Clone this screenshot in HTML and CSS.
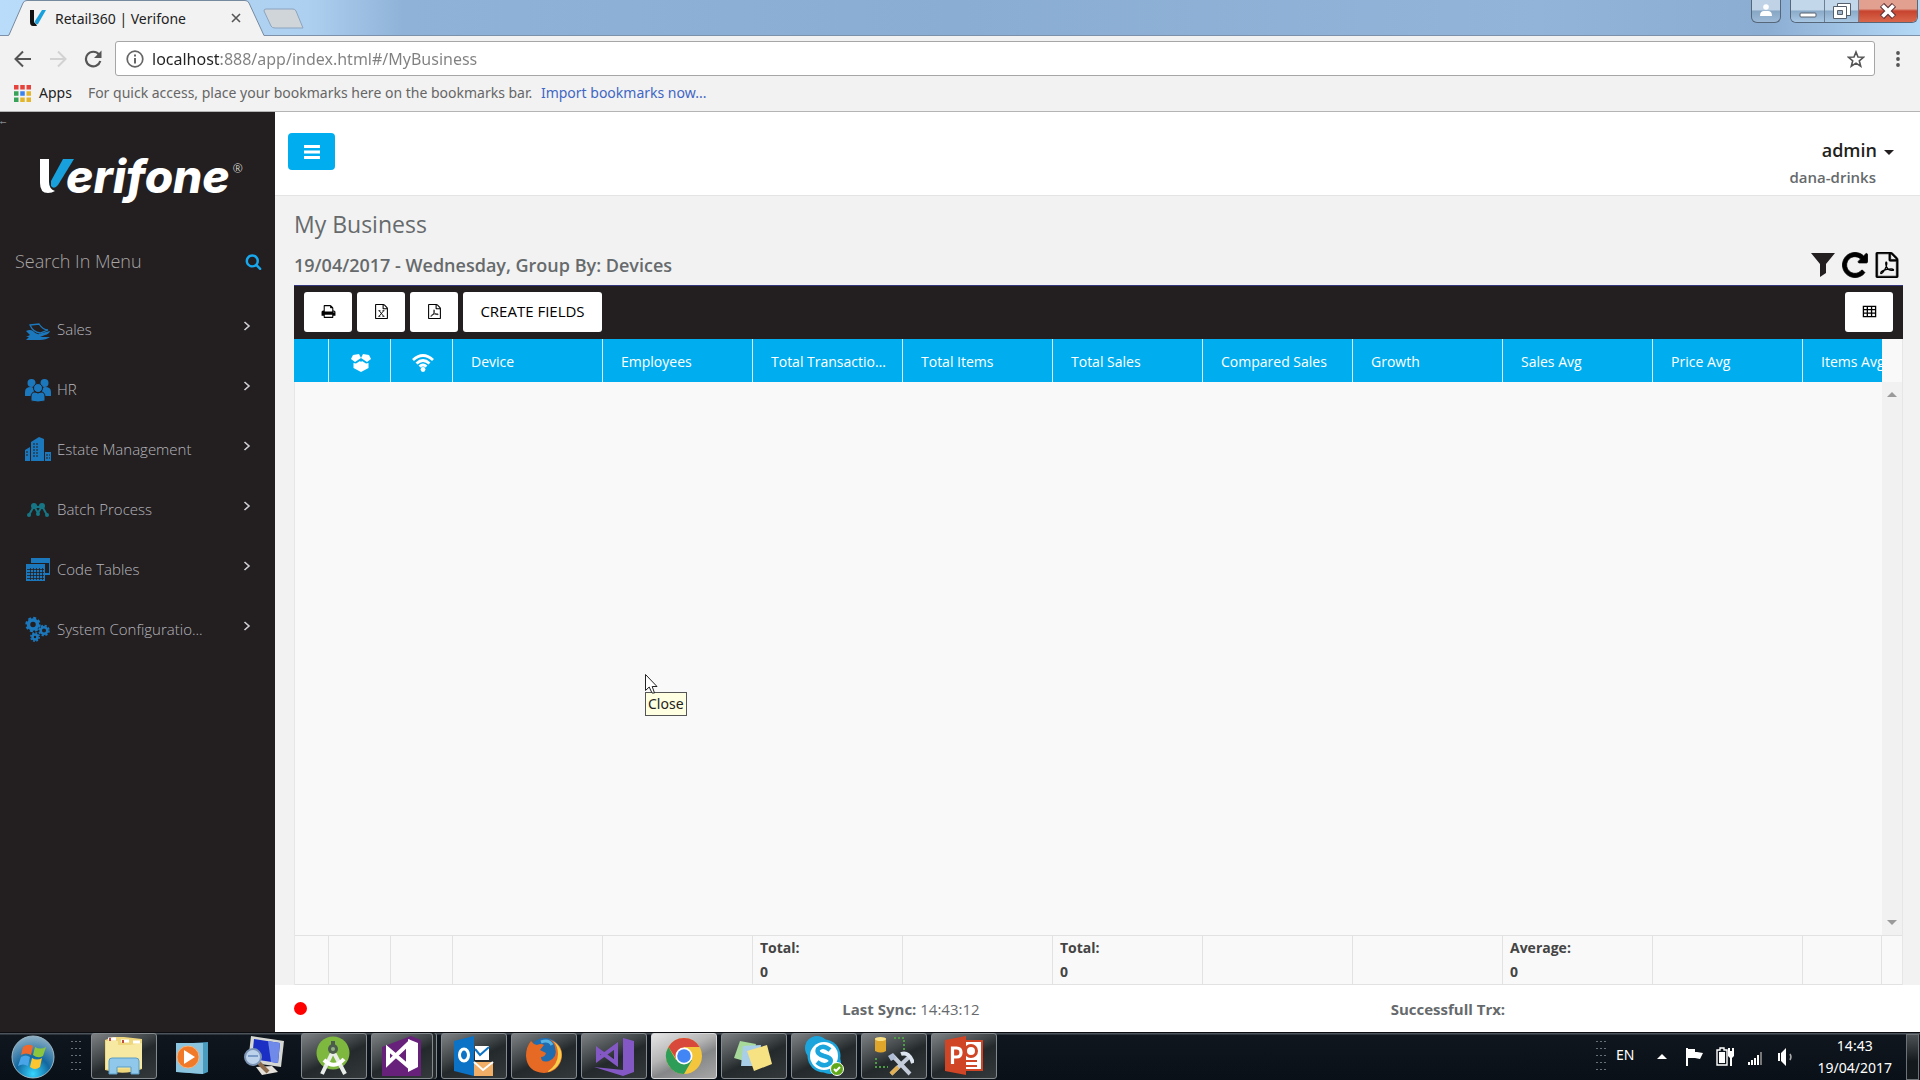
FILE: index.html
```html
<!DOCTYPE html>
<html lang="en">
<head>
    <meta charset="UTF-8" />
    <meta name="viewport" content="width=device-width, initial-scale=1" />
    <title>Retail360 | Verifone</title>
    <link rel="stylesheet" href="styles.css">
</head>
<body>
    <!-- shared icon shapes -->
    <svg class="sprite" aria-hidden="true">
        <symbol id="i-file" viewBox="0 0 1792 1792">
            <path d="M1596 380q28 28 48 76t20 88v1152q0 40-28 68t-68 28h-1344q-40 0-68-28t-28-68v-1600q0-40 28-68t68-28h896q40 0 88 20t76 48zm-444-244v376h376q-10-29-22-41l-313-313q-12-12-41-22zm384 1528v-1024h-416q-40 0-68-28t-28-68v-416h-768v1536h1280z" />
        </symbol>
        <symbol id="i-pdf" viewBox="0 0 1792 1792">
            <use href="#i-file" />
            <path d="M840 690q-70 60 10 310q70 230 330 270q200 20 160-60q-50-80-450-10q-310 50-410 190q-60 120 40 90q170-100 320-480q90-290 0-310z" fill="none" stroke="currentColor" stroke-width="85" />
        </symbol>
        <symbol id="i-excel" viewBox="0 0 1792 1792">
            <use href="#i-file" />
            <path d="M620 800L1150 1470M1160 800L600 1470M540 800h230M1010 800h230M520 1470h230M1010 1470h230" fill="none" stroke="currentColor" stroke-width="105" />
        </symbol>
        <symbol id="i-chevron" viewBox="0 0 8 10">
            <path d="M1.500 1L6 5L1.500 9" fill="none" stroke="currentColor" stroke-width="1.600" />
        </symbol>
    </svg>

    <header class="browser">
        <div class="titlebar">
            <div class="tab">
                <svg class="tab-shape" viewBox="0 0 260 36" aria-hidden="true">
                    <path d="M0 36L2 35L16 3Q17 .5 20 .5H238Q241 .5 242 3L257 35.500L260 36" fill="#f2f2f2" stroke="#75899f" />
                </svg>
                <svg class="tab-icon" viewBox="0 0 18 18" aria-hidden="true">
                    <path d="M1 1H5V12Q5 14 7 15L8 17H4Q1 17 1 13Z" fill="#111" />
                    <path d="M13 1H17L9 15Q6 16 6 12Z" fill="#18a0dc" />
                </svg>
                <span class="tab-title">Retail360 | Verifone</span>
                <button class="tab-close" aria-label="Close tab">
                    <svg viewBox="0 0 10 10"><path d="M1 1L9 9M9 1L1 9" stroke="#555" stroke-width="1.600" /></svg>
                </button>
            </div>
            <button class="new-tab" aria-label="New tab">
                <svg viewBox="0 0 42 22"><path d="M3 1H30Q32 1 33 3L40 20H12Q9 20 8 18L1 3Q1 1 3 1Z" fill="#d0d5da" stroke="#8ba4bf" /></svg>
            </button>
            <button class="profile" aria-label="Profile">
                <svg viewBox="0 0 12 12"><circle cx="6" cy="3" r="2.800" /><path d="M0 12Q0 7 4 7H8Q12 7 12 12Z" /></svg>
            </button>
            <div class="window-controls">
                <button class="win-btn" aria-label="Minimize">
                    <svg viewBox="0 0 18 16"><rect x="1" y="10" width="16" height="4" rx="1" fill="#fff" stroke="#56606c" /></svg>
                </button>
                <button class="win-btn" aria-label="Restore">
                    <svg viewBox="0 0 18 16"><path d="M4.500 .5H17.500V12.500H4.500Z" fill="#fff" stroke="#56606c" /><path d="M.5 3.500H13.500V15.500H.5Z" fill="#fff" stroke="#56606c" /><path d="M4.500 7.500H9.500V11.500H4.500Z" fill="#a0b4cc" stroke="#56606c" /></svg>
                </button>
                <button class="win-btn win-close" aria-label="Close window">
                    <svg viewBox="0 0 18 16"><path d="M3 2L15 14M15 2L3 14" stroke="#60353a" stroke-width="6" /><path d="M3.500 2.500L14.500 13.500M14.500 2.500L3.500 13.500" stroke="#fff" stroke-width="3.800" /></svg>
                </button>
            </div>
        </div>

        <div class="navbar">
            <button class="nav-btn" aria-label="Back">
                <svg viewBox="0 0 18 18"><path d="M17 9H2M9 1.500L1.500 9L9 16.500" fill="none" stroke="#555" stroke-width="2" /></svg>
            </button>
            <button class="nav-btn" aria-label="Forward">
                <svg viewBox="0 0 18 18"><path d="M1 9H16M9 1.500L16.500 9L9 16.500" fill="none" stroke="#d2d2d2" stroke-width="2" /></svg>
            </button>
            <button class="nav-btn" aria-label="Reload">
                <svg viewBox="0 0 18 18"><path d="M15 4.500A7.300 7.300 0 1 0 16.300 11" fill="none" stroke="#555" stroke-width="2.200" /><path d="M17.500 .5V8H10Z" fill="#555" /></svg>
            </button>
            <div class="omnibox">
                <svg class="info" viewBox="0 0 18 18" aria-hidden="true"><circle cx="9" cy="9" r="7.800" fill="none" stroke="#666" stroke-width="1.700" /><path d="M9 8V13.500M9 4.500V6.500" stroke="#666" stroke-width="2" /></svg>
                <input class="url" type="text" aria-label="Address" value="localhost:888/app/index.html#/MyBusiness" />
                <button class="star" aria-label="Bookmark this page">
                    <svg viewBox="0 0 18 18"><path d="M9 2L11 7L16.500 7.300L12.300 10.800L13.700 16.200L9 13.200L4.300 16.200L5.700 10.800L1.500 7.300L7 7Z" fill="none" stroke="#555" stroke-width="1.600" /></svg>
                </button>
            </div>
            <button class="more" aria-label="Menu">
                <svg viewBox="0 0 4 18"><circle cx="2" cy="3" r="1.900" /><circle cx="2" cy="9" r="1.900" /><circle cx="2" cy="15" r="1.900" /></svg>
            </button>
        </div>

        <div class="bookmarks">
            <a class="apps" href="#apps">
                <svg viewBox="0 0 17 17" aria-hidden="true">
                    <path d="M0 0h4.500v4.500H0zM6.250 0h4.500v4.500h-4.500zM12.500 0h4.500v4.500h-4.500z" fill="#e5433c" />
                    <path d="M0 6.250h4.500v4.500H0zM0 12.500h4.500v4.500H0z" fill="#38a358" />
                    <path d="M6.250 6.250h4.500v4.500h-4.500z" fill="#3b82ee" />
                    <path d="M12.500 6.250h4.500v4.500h-4.500zM6.250 12.500h4.500v4.500h-4.500zM12.500 12.500h4.500v4.500h-4.500z" fill="#e3b52b" />
                </svg>
                Apps
            </a>
            <span class="hint">For quick access, place your bookmarks here on the bookmarks bar. <a href="#import">Import bookmarks now...</a></span>
        </div>
    </header>

    <div class="app">
        <aside class="sidebar">
            <span class="back-arrow" aria-hidden="true">←</span>
            <div class="logo" role="img" aria-label="Verifone">
                <svg viewBox="0 0 36 36" aria-hidden="true">
                    <path d="M0 2H9V25Q9 32 15 34Q12 36 8 36Q0 36 0 26Z" fill="#fff" />
                    <path d="M23 2H34L18 28Q14 33 11 29V24Z" fill="#18a0dc" />
                </svg>
                <span class="logo-text">erifone</span><sup>®</sup>
            </div>

            <form class="menu-search">
                <input type="text" aria-label="Search in menu" placeholder="Search In Menu" />
                <button type="button" aria-label="Search">
                    <svg viewBox="0 0 1792 1792"><path d="M1216 832q0-185-131.500-316.500t-316.500-131.500-316.500 131.500-131.500 316.500 131.500 316.500 316.500 131.500 316.500-131.500 131.500-316.500zm512 832q0 52-38 90t-90 38q-54 0-90-38l-343-342q-179 124-399 124-143 0-273.500-55.500t-225-150-150-225-55.500-273.500 55.500-273.500 150-225 225-150 273.500-55.500 273.500 55.500 225 150 150 225 55.500 273.500q0 220-124 399l343 343q37 37 37 90z" /></svg>
                </button>
            </form>

            <nav class="menu" aria-label="Main">
                <a href="#sales">
                    <svg class="menu-icon" viewBox="0 0 26 26" aria-hidden="true">
                        <path d="M1 15Q5 13 8 15Q12 20 17 17L25 15Q24 18 20 19L15 21H25Q21 24 15 24H1L4 21H1L5 19Z" />
                        <path d="M5 9L14 8Q18 14 23 14L15 17Q8 16 5 9Z" fill="none" stroke="currentColor" stroke-width="1.300" />
                    </svg>
                    <span>Sales</span>
                    <svg class="chevron" aria-hidden="true"><use href="#i-chevron" /></svg>
                </a>
                <a href="#hr">
                    <svg class="menu-icon" viewBox="0 0 26 26" aria-hidden="true">
                        <circle cx="6.500" cy="7" r="4" /><circle cx="19.500" cy="7" r="4" />
                        <path d="M0 20V16Q0 11 6 11Q9 11 9 16L7 20ZM26 20V16Q26 11 20 11Q17 11 17 16L19 20Z" />
                        <g stroke="#231f20"><circle cx="13" cy="12" r="4.500" /><path d="M6 25V21Q6 16 10 16Q13 18 16 16Q20 16 20 21V25Q13 27 6 25Z" /></g>
                    </svg>
                    <span>HR</span>
                    <svg class="chevron" aria-hidden="true"><use href="#i-chevron" /></svg>
                </a>
                <a href="#estate">
                    <svg class="menu-icon" viewBox="0 0 26 26" aria-hidden="true">
                        <path d="M0 25V14L5 11V25ZM6 25V6L14 1L19 3V25ZM20 25V16H26V25Z" />
                        <path d="M8 8H13M8 11H13M8 14H13M8 17H13M8 20H13M1 16H4M1 19H4M21 19H25M21 22H25" stroke="#231f20" stroke-width="1" stroke-dasharray="2 1" />
                    </svg>
                    <span>Estate Management</span>
                    <svg class="chevron" aria-hidden="true"><use href="#i-chevron" /></svg>
                </a>
                <a href="#batch">
                    <svg class="menu-icon teal" viewBox="0 0 26 26" aria-hidden="true">
                        <path d="M4 19L9 10L13 17L17 10L22 19M9 10L13 11L17 10" fill="none" stroke="currentColor" stroke-width="2" />
                        <circle cx="9" cy="10" r="3" /><circle cx="17" cy="10" r="3" /><circle cx="4" cy="19" r="2" /><circle cx="22" cy="19" r="2" /><circle cx="13" cy="18" r="2" />
                    </svg>
                    <span>Batch Process</span>
                    <svg class="chevron" aria-hidden="true"><use href="#i-chevron" /></svg>
                </a>
                <a href="#codes">
                    <svg class="menu-icon" viewBox="0 0 26 26" aria-hidden="true">
                        <path d="M6 2H25V19H20V17H24V7H6Z" />
                        <path d="M1 8H20V25H1Z" />
                        <path d="M2 13.500H19M2 16.500H19M2 19.500H19M2 22.500H19M5.500 12V24M8.500 12V24M11.500 12V24M14.500 12V24M17.500 12V24" stroke="#231f20" stroke-width=".8" />
                    </svg>
                    <span>Code Tables</span>
                    <svg class="chevron" aria-hidden="true"><use href="#i-chevron" /></svg>
                </a>
                <a href="#config">
                    <svg class="menu-icon" viewBox="0 0 26 26" aria-hidden="true">
                        <g fill="none" stroke="currentColor">
                            <circle cx="8" cy="8.500" r="4.500" stroke-width="3.500" /><circle cx="8" cy="8.500" r="6.700" stroke-width="2" stroke-dasharray="3 2.260" />
                            <circle cx="19" cy="14.500" r="3.300" stroke-width="2.500" /><circle cx="19" cy="14.500" r="5" stroke-width="1.600" stroke-dasharray="2.200 1.730" />
                            <circle cx="10" cy="21" r="2.500" stroke-width="2.500" /><circle cx="10" cy="21" r="4.200" stroke-width="1.500" stroke-dasharray="1.800 1.500" />
                        </g>
                    </svg>
                    <span>System Configuratio...</span>
                    <svg class="chevron" aria-hidden="true"><use href="#i-chevron" /></svg>
                </a>
            </nav>
        </aside>

        <div class="content">
            <header class="topbar">
                <button class="menu-toggle" aria-label="Toggle menu">
                    <svg viewBox="0 0 16 14"><path d="M0 1.500H16M0 7H16M0 12.500H16" stroke="#fff" stroke-width="2.800" /></svg>
                </button>
                <div class="user">
                    <button class="user-name">admin <svg viewBox="0 0 10 5" aria-hidden="true"><path d="M0 0H10L5 5Z" /></svg></button>
                    <span class="user-org">dana-drinks</span>
                </div>
            </header>

            <main class="page">
                <h1>My Business</h1>
                <div class="subhead">
                    <h2>19/04/2017 - Wednesday, Group By: Devices</h2>
                    <div class="actions">
                        <button aria-label="Filter"><svg viewBox="0 0 26 26"><path d="M1 1H25L16 12V21L10 25V12Z" fill="#231f20" /></svg></button>
                        <button aria-label="Refresh"><svg viewBox="100 100 1592 1592"><path d="M1664 256v448q0 26-19 45t-45 19h-448q-42 0-59-40-17-39 14-69l138-138q-148-137-349-137-104 0-198.500 40.500t-163.500 109.500-109.500 163.500-40.500 198.500 40.500 198.500 109.500 163.500 163.500 109.500 198.500 40.500q119 0 225-52t179-147q7-10 23-12 15 0 25 9l137 138q9 8 9.500 20.500t-7.500 22.500q-109 132-264 204.500t-327 72.500q-156 0-298-61t-245-164-164-245-61-298 61-298 164-245 245-164 298-61q147 0 284.500 55.500t244.500 156.500l130-129q29-31 70-14 39 17 39 59z" stroke="#000" stroke-width="50" /></svg></button>
                        <button aria-label="Export page to PDF"><svg stroke="#000" stroke-width="40"><use href="#i-pdf" /></svg></button>
                    </div>
                </div>

                <section class="grid" aria-label="Devices">
                    <div class="grid-toolbar">
                        <button aria-label="Print"><svg viewBox="0 0 1792 1792"><path d="M448 1536h896v-256h-896v256zm0-640h896v-384h-160q-40 0-68-28t-28-68v-160h-640v640zm1152 64q0-26-19-45t-45-19-45 19-19 45 19 45 45 19 45-19 19-45zm128 0v416q0 13-9.500 22.500t-22.500 9.500h-224v160q0 40-28 68t-68 28h-960q-40 0-68-28t-28-68v-160h-224q-13 0-22.500-9.500t-9.500-22.500v-416q0-79 56.500-135.500t135.500-56.500h64v-544q0-40 28-68t68-28h672q40 0 88 20t76 48l152 152q28 28 48 76t20 88v256h64q79 0 135.500 56.500t56.500 135.500z" /></svg></button>
                        <button aria-label="Export to Excel"><svg><use href="#i-excel" /></svg></button>
                        <button aria-label="Export to PDF"><svg><use href="#i-pdf" /></svg></button>
                        <button class="create">CREATE FIELDS</button>
                        <button class="columns" aria-label="Columns"><svg viewBox="0 0 16 16"><path d="M1.500 2.500H14.500V13.500H1.500ZM1.500 6H14.500M1.500 9.700H14.500M5.700 3V13.500M10.200 3V13.500" fill="none" stroke="#000" stroke-width="1.400" /></svg></button>
                    </div>

                    <div class="grid-head">
                        <table>
                            <colgroup><col class="c-mark"><col class="c-icon"><col class="c-icon"><col span="10" class="c-data"></colgroup>
                            <thead>
                                <tr>
                                    <th></th>
                                    <th aria-label="Package"><svg viewBox="0 0 20 18"><path d="M2 1L8 0L10 4L4 8L0 5ZM18 1L12 0L10 4L16 8L20 5ZM2.500 9L5 9.500L9 7L10 8L11 7L15 9.500L17.500 9V14L10 18L2.500 14Z" fill="#fff" /></svg></th>
                                    <th aria-label="Connection"><svg viewBox="0 0 22 18"><path d="M1 6Q11 -3 21 6M4.500 9.500Q11 3.500 17.500 9.500M7.500 12.500Q11 9.500 14.500 12.500" fill="none" stroke="#fff" stroke-width="2.800" /><circle cx="11" cy="15.500" r="2.400" fill="#fff" /></svg></th>
                                    <th>Device</th>
                                    <th>Employees</th>
                                    <th>Total Transactions</th>
                                    <th>Total Items</th>
                                    <th>Total Sales</th>
                                    <th>Compared Sales</th>
                                    <th>Growth</th>
                                    <th>Sales Avg</th>
                                    <th>Price Avg</th>
                                    <th>Items Avg</th>
                                </tr>
                            </thead>
                        </table>
                    </div>

                    <div class="grid-body">
                        <div class="scroll" aria-hidden="true">
                            <svg viewBox="0 0 10 5"><path d="M0 5H10L5 0Z" /></svg>
                            <svg viewBox="0 0 10 5"><path d="M0 0H10L5 5Z" /></svg>
                        </div>
                    </div>

                    <div class="grid-foot">
                        <div class="foot-wrap">
                            <table>
                                <colgroup><col class="c-mark"><col class="c-icon"><col class="c-icon"><col span="10" class="c-data"></colgroup>
                                <tbody>
                                    <tr>
                                        <td></td><td></td><td></td><td></td><td></td>
                                        <td>Total:<br>0</td>
                                        <td></td>
                                        <td>Total:<br>0</td>
                                        <td></td><td></td>
                                        <td>Average:<br>0</td>
                                        <td></td><td></td>
                                    </tr>
                                </tbody>
                            </table>
                        </div>
                    </div>
                </section>
            </main>

            <footer class="status">
                <div><span class="dot"></span></div>
                <div><b>Last Sync:</b> 14:43:12</div>
                <div><b>Successfull Trx:</b></div>
            </footer>
        </div>
    </div>

    <footer class="taskbar">
        <button class="start" aria-label="Start">
            <svg viewBox="0 0 44 44">
                <defs><radialGradient id="orb" cx=".5" cy=".9" r=".9"><stop offset="0" stop-color="#35d6ff" /><stop offset=".45" stop-color="#12679f" /><stop offset="1" stop-color="#8fb0c4" /></radialGradient></defs>
                <circle cx="22" cy="22" r="21" fill="url(#orb)" stroke="#9db9c8" />
                <path d="M12 12Q17 8 22 11L20 20Q15 17 10 20Z" fill="#f0682b" />
                <path d="M24 12Q29 15 35 12L32 21Q27 24 22 20Z" fill="#8cc63e" />
                <path d="M10 22Q15 19 19 22L17 31Q12 28 7 31Z" fill="#4aa5e8" />
                <path d="M21 23Q26 26 31 23L29 32Q24 36 19 32Z" fill="#fbc62f" />
            </svg>
        </button>
        <span class="grip"></span>

        <nav class="tasks" aria-label="Running programs">
            <button class="task open" aria-label="Explorer">
                <svg viewBox="0 0 40 40"><path d="M1 4L9 1H20L38 3V33Q20 40 1 34Z" fill="#efd77e" /><path d="M2 5H14V9H26L38 7V32L2 33Z" fill="#f7e9a2" /><path d="M4 3H12M17 5H25M29 6H36" stroke="#fff" stroke-width="3" /><path d="M6 2V5M19 4V7" stroke="#c64b3b" stroke-width="2" /><path d="M5 38V25Q5 22 8 22H32Q35 22 35 25V38H27V31H13V38Z" fill="#8fc8ea" stroke="#5b9cc6" /></svg>
            </button>
            <button class="task" aria-label="Media player">
                <svg viewBox="0 0 40 40"><path d="M4 8L34 6V36L29 38L4 36Z" fill="#4a9cbf" /><path d="M2 7H29V38L2 36Z" fill="#8cc5df" /><circle cx="14" cy="21" r="11" fill="#f0792a" stroke="#f7b27e" /><path d="M10 14L21 21L10 28Z" fill="#fff" /></svg>
            </button>
            <button class="task" aria-label="Remote viewer">
                <svg viewBox="0 0 40 40"><path d="M7 0L40 5L37 31L4 26Z" fill="#d5d7d2" /><path d="M10 3L36 7L34 27L8 23Z" fill="#1b2fc4" /><path d="M24 5L36 7L34 27L27 26Z" fill="#6f8ae8" /><path d="M12 31L28 30L34 36L18 39Z" fill="#e3e1da" /><path d="M15 27L24 36" stroke="#8c6c4d" stroke-width="4" /><circle cx="9" cy="21" r="8" fill="#bdd3ec" stroke="#7d95b5" stroke-width="2" /><path d="M4 20H14" stroke="#7b9cc7" stroke-width="2" /></svg>
            </button>
            <button class="task open" aria-label="Android Studio">
                <svg viewBox="0 0 40 40"><circle cx="19" cy="17" r="16.500" fill="#7fb83f" /><path d="M19 15L8 38M19 15L31 38" stroke="#e9eeea" stroke-width="4" /><path d="M10 24Q20 34 30 23" fill="none" stroke="#fff" stroke-width="4" /><circle cx="19" cy="13" r="5" fill="#4b5b4e" /><path d="M19 5V13" stroke="#4b5b4e" stroke-width="4" /><circle cx="19" cy="13" r="2" fill="#93ae80" /></svg>
            </button>
            <button class="task open stacked" aria-label="Visual Studio 2013">
                <svg viewBox="0 0 40 40"><path d="M0 11L29 0L39 4V40H0Z" fill="#68217a" /><path d="M6 13L26 30V8L6 27Z" fill="none" stroke="#fff" stroke-width="4" /><path d="M26 3L36 7V31L26 36Z" fill="#fff" /></svg>
            </button>
            <button class="task open" aria-label="Outlook">
                <svg viewBox="0 0 40 40"><path d="M0 5L20 0V40L0 35Z" fill="#0b72c6" /><ellipse cx="10" cy="19" rx="4.500" ry="6" fill="none" stroke="#fff" stroke-width="3" /><path d="M21 10H35V24H21Z" fill="#fff" /><path d="M21 13L26 19L35 11" fill="none" stroke="#0b72c6" stroke-width="2" /><path d="M20 26H39V40H20Z" fill="#f0ae67" /><path d="M20 26L29 34L39 26" fill="none" stroke="#fff" stroke-width="2" /></svg>
            </button>
            <button class="task open" aria-label="Firefox">
                <svg viewBox="0 0 40 40"><circle cx="21" cy="19" r="17" fill="#1f6cb0" /><path d="M25 3Q39 8 38 21Q35 36 20 37Q3 36 2 20Q2 11 7 5Q9 8 13 9Q17 7 20 9L16 14L22 17Q21 21 17 21Q17 27 25 25Q34 21 31 11Q30 6 25 3Z" fill="#e66a24" /><path d="M29 5Q41 13 36 26Q32 34 23 36Q34 29 34 18Q34 10 29 5Z" fill="#f7cf4a" /><path d="M17 6Q25 3 28 9" fill="none" stroke="#58b3e2" stroke-width="3" /></svg>
            </button>
            <button class="task open" aria-label="Visual Studio 2015">
                <svg viewBox="0 0 40 40"><path d="M29 2L40 5V36L29 40L0 31L29 34Z" fill="#8358c5" /><path d="M4 14L22 27V10L4 23Z" fill="none" stroke="#8358c5" stroke-width="4" /></svg>
            </button>
            <button class="task open active" aria-label="Chrome">
                <svg viewBox="0 0 40 40"><circle cx="20" cy="20" r="18" fill="#f4c63d" /><path d="M4.400 11A18 18 0 0 1 35.600 11H20L13 24Z" fill="#d8483b" /><path d="M4.400 11A18 18 0 0 0 20 38L28 24L12 24Z" fill="#2e9d58" /><circle cx="20" cy="20" r="8.500" fill="#fff" /><circle cx="20" cy="20" r="6.800" fill="#4285f4" /></svg>
            </button>
            <button class="task open" aria-label="Sticky notes">
                <svg viewBox="0 0 40 40"><path d="M6 5L22 8L17 27L0 22Z" fill="#a7d99b" /><path d="M9 10L27 9L25 30L7 30Z" fill="#a9cee8" /><path d="M13 15L33 9L38 28L20 35Z" fill="#f7e283" /></svg>
            </button>
            <button class="task open" aria-label="Skype">
                <svg viewBox="0 0 40 40"><circle cx="13" cy="12" r="12" fill="#1ca5dc" /><circle cx="20" cy="20" r="16.500" fill="#1ca5dc" /><circle cx="26" cy="27" r="11" fill="#1ca5dc" /><circle cx="20" cy="20" r="14" fill="#fff" /><path d="M26 14Q19 8 14 13Q12 18 20 20Q29 22 26 27Q20 32 13 26" fill="none" stroke="#1ca5dc" stroke-width="4.500" /><circle cx="33" cy="33" r="6.500" fill="#61a91b" stroke="#fff" /><path d="M30 33L32 35L36 31" fill="none" stroke="#fff" stroke-width="2" /></svg>
            </button>
            <button class="task open" aria-label="Database tools">
                <svg viewBox="0 0 40 40"><path d="M1 2H12V15Q7 18 1 15Z" fill="#e0a62b" /><ellipse cx="6.500" cy="3" rx="5.500" ry="2" fill="#f8df83" /><path d="M20 2H30V14M2 22V31H14" fill="none" stroke="#4e9b46" stroke-width="2" stroke-dasharray="2 2" /><path d="M18 19L36 38M35 21L17 38" stroke="#c4ccda" stroke-width="4" /><path d="M24 31L17 38" stroke="#e2b054" stroke-width="4" /><path d="M27 18Q35 15 39 27" fill="none" stroke="#dce5ef" stroke-width="4" /><path d="M14 20L19 17L22 22L17 25Z" fill="#aebcd6" /></svg>
            </button>
            <button class="task open" aria-label="PowerPoint">
                <svg viewBox="0 0 40 40"><path d="M20 5H38V34H20Z" fill="#fff" stroke="#d04525" stroke-width="2" /><circle cx="27" cy="15" r="5.500" fill="none" stroke="#d04525" stroke-width="3" /><path d="M22 25H33M22 30H33" stroke="#d04525" stroke-width="2" /><path d="M1 4L22 0V39L1 35Z" fill="#d04525" /><path d="M8.500 28V12H12.500Q17 12 17 16.500T12.500 21H8.500" fill="none" stroke="#fff" stroke-width="3.200" /></svg>
            </button>
        </nav>

        <div class="tray">
            <span class="grip"></span>
            <span class="lang">EN</span>
            <svg class="tray-up" viewBox="0 0 10 5" aria-hidden="true"><path d="M0 5L5 0L10 5Z" /></svg>
            <svg viewBox="0 0 20 20" aria-hidden="true"><path d="M1 1H3V19H1ZM3 2H10V5H12L18 6L15 12L10 11H3Z" /></svg>
            <svg viewBox="0 0 20 20" aria-hidden="true"><path d="M1 3H4V1H8V3H11V18H1Z" fill="none" stroke="#fff" stroke-width="1.400" /><path d="M3 5H9V16H3ZM12 4H18V9L16 11V19H14V11L12 9ZM12 1H14V4H12ZM16 1H18V4H16Z" /></svg>
            <svg viewBox="0 0 20 20" aria-hidden="true"><path d="M1 15H3V18H1ZM4 13H6V18H4ZM7 11H9V18H7ZM10 8H12V18H10Z" /><path d="M13 5H15V18H13Z" fill="#777" /></svg>
            <svg viewBox="0 0 20 20" aria-hidden="true"><path d="M0 6H2V14H0ZM3 6L8 1V19L3 14Z" /><path d="M12 7Q14 10 12 13" fill="none" stroke="#aaa" stroke-width="1.500" /></svg>
            <time class="clock">14:43<br>19/04/2017</time>
            <button class="show-desktop" aria-label="Show desktop"></button>
        </div>
    </footer>

    <div class="pointer">
        <svg viewBox="0 0 13 20" aria-hidden="true"><path d="M.5 .5V16.500L4.200 13L7 19H9.500L7.200 12.500H12Z" fill="#fff" stroke="#222" /></svg>
        <span class="tooltip" role="tooltip">Close</span>
    </div>
</body>
</html>
```

FILE: styles.css
```css
*, *::before, *::after {
    box-sizing: border-box;
}

body {
    margin: 0;
    min-height: 100vh;
    display: flex;
    flex-direction: column;
    font-family: "Open Sans", "Noto Sans", sans-serif;
    font-size: 14px;
    color: #666a6c;
    background: #f2f2f2;
    overflow: hidden;
}

button {
    border: none;
    background: none;
    padding: 0;
    font: inherit;
    color: inherit;
    cursor: pointer;
}

svg {
    display: block;
    fill: currentColor;
}

h1, h2 {
    margin: 0;
}

a {
    color: inherit;
    text-decoration: none;
}

.sprite {
    position: absolute;
    width: 0;
    height: 0;
}

/* Browser chrome */
.browser {
    background: #f2f2f2;
    border-bottom: 1px solid #b4b4b4;
    font-family: "Noto Sans", sans-serif;
}

.titlebar {
    display: flex;
    align-items: flex-start;
    height: 36px;
    padding: 0 2px 0 7px;
    border-bottom: 1px solid #7d92aa;
    background: linear-gradient(90deg, #b9dcfa 0, #aed0f0 16%, #8fb2d8 21%, #8aadd3 50%, #93b4d9 80%, #8badd2 92%, #b4d9f6 100%);
}

.tab {
    position: relative;
    display: flex;
    align-items: center;
    width: 256px;
    height: 36px;
    padding: 0 22px;
    color: #222;
}

.tab-shape {
    position: absolute;
    left: 0;
    top: 0;
    width: 260px;
    height: 36px;
}

.tab-icon {
    position: relative;
    width: 18px;
    height: 18px;
    margin-right: 8px;
}

.tab-title {
    position: relative;
    flex: 1;
}

.tab-close {
    position: relative;
    width: 10px;
}

.new-tab {
    width: 42px;
    margin-top: 8px;
}

.profile {
    display: flex;
    justify-content: center;
    width: 30px;
    height: 23px;
    margin: 0 9px 0 auto;
    padding-top: 4px;
    color: #fff;
    background: linear-gradient(#bfd2e6 45%, #87a6c4 50%, #9dbbd8);
    border: 1px solid #56677a;
    border-top: none;
    border-radius: 0 0 6px 6px;
}

.profile svg {
    width: 12px;
    height: 12px;
}

.window-controls {
    display: flex;
    height: 23px;
    border: 1px solid #56677a;
    border-top: none;
    border-radius: 0 0 6px 6px;
    overflow: hidden;
}

.win-btn {
    display: flex;
    justify-content: center;
    width: 34px;
    padding-top: 3px;
    border-right: 1px solid #6b7f95;
    background: linear-gradient(#c3d7ea 45%, #8aaac9 50%, #a8c8e4);
}

.win-btn svg {
    width: 18px;
    height: 16px;
}

.win-close {
    width: 58px;
    border-right: none;
    background: linear-gradient(#e2a090 40%, #c7432f 50%, #d9674a);
}

.navbar {
    display: flex;
    align-items: center;
    height: 45px;
    padding: 0 20px 0 14px;
}

.nav-btn {
    width: 18px;
    margin-right: 17px;
}

.nav-btn svg {
    width: 18px;
    height: 18px;
}

.omnibox {
    flex: 1;
    display: flex;
    align-items: center;
    height: 35px;
    margin-left: -4px;
    padding: 0 9px 0 10px;
    background: #fff;
    border: 1px solid #a6a6a6;
    border-radius: 3px;
}

.info {
    width: 18px;
    height: 18px;
}

.url {
    flex: 1;
    border: none;
    outline: none;
    padding: 0 0 0 8px;
    font-family: inherit;
    font-size: 16px;
    background: linear-gradient(90deg, #222 76px, #808080 76px);
    background-clip: text;
    color: transparent;
}

.star svg {
    width: 18px;
    height: 18px;
}

.more {
    margin-left: 21px;
    color: #555;
}

.more svg {
    width: 4px;
    height: 18px;
}

.bookmarks {
    display: flex;
    align-items: center;
    height: 30px;
    padding: 0 14px 6px;
    gap: 16px;
    font-size: 14px;
    line-height: 24px;
    color: #666;
}

.apps {
    display: flex;
    align-items: center;
    gap: 8px;
    color: #222;
}

.apps svg {
    width: 17px;
    height: 17px;
}

.hint a {
    margin-left: 5px;
    color: #3f66c4;
}

/* App */
.app {
    flex: 1;
    display: flex;
}

.sidebar {
    width: 275px;
    background: #231f20;
    color: #b6b6bd;
    font-weight: 300;
}

.back-arrow {
    display: block;
    height: 45px;
    font-family: "DejaVu Sans", sans-serif;
    font-size: 8px;
    line-height: 22px;
}

.logo {
    display: flex;
    align-items: flex-start;
    height: 36px;
    margin-left: 40px;
    color: #fff;
}

.logo svg {
    width: 36px;
    height: 36px;
    margin-right: -10px;
}

.logo-text {
    font-family: Inter, sans-serif;
    font-size: 46px;
    font-weight: 800;
    font-style: italic;
    line-height: 39px;
}

.logo sup {
    margin-left: 3px;
    font-size: 12px;
    line-height: 24px;
}

.menu-search {
    display: flex;
    align-items: center;
    height: 40px;
    margin: 48px 0 18px;
    padding: 0 13px 0 15px;
}

.menu-search input {
    flex: 1;
    min-width: 0;
    border: none;
    outline: none;
    padding: 0;
    background: none;
    font-family: inherit;
    font-size: 18px;
    font-weight: 300;
    color: #fff;
}

.menu-search input::placeholder {
    color: #a9a6a6;
}

.menu-search button {
    color: #18a8ee;
}

.menu-search svg {
    width: 17px;
    height: 17px;
}

.menu a {
    display: flex;
    align-items: center;
    height: 60px;
    padding: 0 24px 0 25px;
    font-size: 15px;
}

.menu-icon {
    width: 26px;
    height: 26px;
    margin-right: 6px;
    color: #1c78bd;
}

.menu-icon.teal {
    color: #167685;
}

.chevron {
    width: 8px;
    height: 10px;
    margin: 0 0 7px auto;
    color: #cfcfd6;
}

.content {
    flex: 1;
    min-width: 0;
    display: flex;
    flex-direction: column;
}

.topbar {
    display: flex;
    justify-content: space-between;
    align-items: flex-start;
    height: 84px;
    padding: 21px 26px 0 13px;
    background: #fff;
    border-bottom: 1px solid #e4e4e4;
}

.menu-toggle {
    display: flex;
    align-items: center;
    justify-content: center;
    width: 47px;
    height: 37px;
    background: #00aeef;
    border-radius: 4px;
}

.menu-toggle svg {
    width: 16px;
    height: 14px;
}

.user {
    display: flex;
    flex-direction: column;
    align-items: flex-end;
    padding-top: 4px;
}

.user-name {
    display: flex;
    align-items: center;
    gap: 7px;
    font-size: 18px;
    font-weight: 600;
    line-height: 26px;
    color: #231f20;
}

.user-name svg {
    width: 10px;
    height: 5px;
    margin-top: 4px;
}

.user-org {
    margin-right: 18px;
    font-size: 15px;
    font-weight: 600;
    line-height: 28px;
}

.page {
    flex: 1;
    display: flex;
    flex-direction: column;
    padding: 11px 17px 0 19px;
}

h1 {
    font-size: 23px;
    font-weight: 500;
    line-height: 34px;
}

.subhead {
    display: flex;
    justify-content: space-between;
    align-items: center;
    height: 44px;
    padding-top: 4px;
}

h2 {
    font-size: 18px;
    font-weight: 600;
}

.actions {
    display: flex;
    gap: 6px;
    padding-right: 3px;
    color: #000;
}

.actions svg {
    width: 26px;
    height: 26px;
}

.grid {
    flex: 1;
    display: flex;
    flex-direction: column;
    background: #f9f9f9;
    border-right: 1px solid #e6e6e6;
    border-left: 1px solid #e6e6e6;
}

.grid-toolbar {
    display: flex;
    gap: 5px;
    height: 54px;
    margin: 0 -1px;
    padding: 6px 10px 7px;
    background: #231f20;
    border-top: 1px solid #34367c;
    color: #000;
}

.grid-toolbar button {
    display: flex;
    align-items: center;
    justify-content: center;
    width: 48px;
    padding-bottom: 2px;
    background: #fff;
    border-radius: 3px;
}

.grid-toolbar svg {
    width: 15px;
    height: 15px;
}

.grid-toolbar .create {
    width: 139px;
    font-size: 15px;
}

.grid-toolbar .columns {
    margin-left: auto;
}

.grid table {
    width: 1658px;
    table-layout: fixed;
    border-collapse: separate;
    border-spacing: 0;
}

.c-mark {
    width: 34px;
}

.c-icon {
    width: 62px;
}

.c-data {
    width: 150px;
}

.grid-head {
    margin: 0 20px 0 -1px;
    overflow: hidden;
    background: #00aeef;
}

.grid th {
    height: 43px;
    padding: 2px 15px 0 18px;
    border-left: 1px solid #d9f1fb;
    color: #fff;
    font-size: 14px;
    font-weight: 400;
    text-align: left;
    white-space: nowrap;
    overflow: hidden;
    text-overflow: ellipsis;
}

.grid th:first-child, .grid td:first-child {
    border-left: none;
}

.grid th svg {
    width: 22px;
    height: 18px;
    margin: 3px 0 0 3px;
}

.grid-body {
    flex: 1;
    display: flex;
    justify-content: flex-end;
}

.scroll {
    display: flex;
    flex-direction: column;
    justify-content: space-between;
    width: 20px;
    padding: 10px 5px;
    background: #f1f1f1;
    color: #9a9a9a;
}

.scroll svg {
    width: 10px;
    height: 5px;
}

.grid-foot {
    border-top: 1px solid #e2e2e2;
    border-bottom: 1px solid #e2e2e2;
    padding-right: 20px;
}

.foot-wrap {
    margin-left: -1px;
    overflow: hidden;
    border-right: 1px solid #e2e2e2;
}

.grid td {
    height: 48px;
    padding: 0 7px;
    border-left: 1px solid #e2e2e2;
    color: #444;
    font-weight: 700;
    line-height: 24px;
    vertical-align: top;
}

.status {
    display: grid;
    grid-template-columns: repeat(3, 1fr);
    align-items: center;
    height: 47px;
    background: #fff;
    font-size: 15px;
}

.status div {
    padding: 0 19px;
}

.dot {
    display: block;
    width: 13px;
    height: 13px;
    border-radius: 50%;
    background: #f00;
}

/* Taskbar */
.taskbar {
    display: flex;
    height: 48px;
    border-top: 1px solid #0b0d10;
    background: linear-gradient(#4c535b 0, #4c535b 1px, #10161d 2px, #0a1017);
    color: #fff;
    font-family: "Noto Sans", sans-serif;
}

.start {
    width: 44px;
    margin-left: 11px;
}

.start svg {
    width: 44px;
    height: 44px;
}

.grip {
    width: 12px;
    margin: 5px 0 4px 15px;
    background: radial-gradient(circle, #667079 1px, transparent 1px) 0 0 / 4px 7px;
}

.tasks {
    display: flex;
    gap: 4px;
    margin-left: 9px;
}

.task {
    display: flex;
    align-items: center;
    justify-content: center;
    width: 66px;
    height: 46px;
    border-radius: 3px;
}

.task svg {
    width: 40px;
    height: 40px;
}

.task.open {
    border: 1px solid #858a8e;
    background: linear-gradient(155deg, #7d8184 0, #3f4447 40%, #24292c 55%, #34393c);
}

.task.stacked {
    width: 62px;
    margin-right: 4px;
    box-shadow: 3px 0 0 #24292c, 4px 0 0 #858a8e;
}

.task.active {
    border-color: #d8d8d8;
    background: linear-gradient(155deg, #e5e5e5 0, #b5b5b6 40%, #858687 60%, #a6a6a7);
}

.tray {
    display: flex;
    align-items: center;
    margin-left: auto;
}

.tray .grip {
    align-self: stretch;
    margin-left: 0;
}

.tray svg {
    width: 20px;
    height: 20px;
    margin-right: 11px;
}

.lang {
    margin: 0 22px 4px 9px;
}

.tray .tray-up {
    width: 10px;
    height: 5px;
    margin-right: 18px;
}

.clock {
    margin: 0 14px 0 9px;
    line-height: 22px;
    text-align: center;
}

.show-desktop {
    width: 13px;
    height: 46px;
    margin-right: 1px;
    border: 1px solid #6d7276;
    background: linear-gradient(#4c5256, #14191d 60%);
}

/* Mouse pointer and its tooltip float over the page */
.pointer {
    position: absolute;
    left: 645px;
    top: 674px;
}

.pointer svg {
    width: 13px;
    height: 20px;
}

.tooltip {
    display: block;
    margin-top: -2px;
    padding: 0 2px;
    border: 1px solid #555;
    background: #ffffe1;
    color: #222;
    font-family: "Noto Sans", sans-serif;
    font-size: 14px;
    line-height: 22px;
}
```
